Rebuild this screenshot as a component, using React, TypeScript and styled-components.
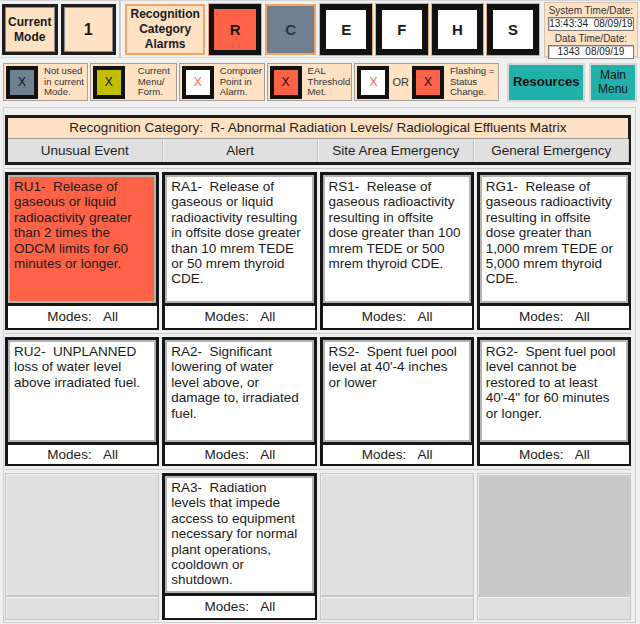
import React from "react";
import styled, { createGlobalStyle, css } from "styled-components";

const GlobalStyle = createGlobalStyle`
  html, body {
    margin: 0;
    padding: 0;
    background: #f0f0f0;
    font-family: "Liberation Sans", Arial, sans-serif;
    color: #1a1a1a;
  }
`;

const PEACH = "#ffe1c4";
const SANDY = "#f2a462";
const TOMATO = "#ff6347";

type Tone = "active" | "off" | "plain";

const categories: { key: string; tone: Tone }[] = [
  { key: "R", tone: "active" },
  { key: "C", tone: "off" },
  { key: "E", tone: "plain" },
  { key: "F", tone: "plain" },
  { key: "H", tone: "plain" },
  { key: "S", tone: "plain" },
];

type Entry = { text: string; hot?: boolean } | null;

const rows: { height: number; modesHeight: number; cells: Entry[]; darkLast?: boolean }[] = [
  {
    height: 134,
    modesHeight: 24,
    cells: [
      {
        text: "RU1-  Release of\ngaseous or liquid\nradioactivity greater\nthan 2 times the\nODCM limits for 60\nminutes or longer.",
        hot: true,
      },
      {
        text: "RA1-  Release of\ngaseous or liquid\nradioactivity resulting\nin offsite dose greater\nthan 10 mrem TEDE\nor 50 mrem thyroid\nCDE.",
      },
      {
        text: "RS1-  Release of\ngaseous radioactivity\nresulting in offsite\ndose greater than 100\nmrem TEDE or 500\nmrem thyroid CDE.",
      },
      {
        text: "RG1-  Release of\ngaseous radioactivity\nresulting in offsite\ndose greater than\n1,000 mrem TEDE or\n5,000 mrem thyroid\nCDE.",
      },
    ],
  },
  {
    height: 108,
    modesHeight: 21,
    cells: [
      { text: "RU2-  UNPLANNED\nloss of water level\nabove irradiated fuel." },
      { text: "RA2-  Significant\nlowering of water\nlevel above, or\ndamage to, irradiated\nfuel." },
      { text: "RS2-  Spent fuel pool\nlevel at 40'-4 inches\nor lower" },
      { text: "RG2-  Spent fuel pool\nlevel cannot be\nrestored to at least\n40'-4\" for 60 minutes\nor longer." },
    ],
  },
  {
    height: 123,
    modesHeight: 24,
    darkLast: true,
    cells: [
      null,
      {
        text: "RA3-  Radiation\nlevels that impede\naccess to equipment\nnecessary for normal\nplant operations,\ncooldown or\nshutdown.",
      },
      null,
      null,
    ],
  },
];

export default function App() {
  return (
    <>
      <GlobalStyle />
      <Screen>
        <TopBar>
          <ModeBox>Current<br />Mode</ModeBox>
          <ModeBox $big>1</ModeBox>
          <Divider />
          <AlarmLabel>Recognition<br />Category<br />Alarms</AlarmLabel>
          {categories.map((c) => (
            <CategoryButton key={c.key} $tone={c.tone}>
              {c.key}
            </CategoryButton>
          ))}
          <TimePanel>
            <TimeLabel>System Time/Date:</TimeLabel>
            <TimeField>13:43:34&nbsp;&nbsp;08/09/19</TimeField>
            <TimeLabel>Data Time/Date:</TimeLabel>
            <TimeField>1343&nbsp;&nbsp;08/09/19</TimeField>
          </TimePanel>
        </TopBar>

        <LegendBar>
          <LegendBox $width={85}>
            <Swatch $fill="#708090">X</Swatch>
            <LegendText>Not used<br />in current<br />Mode.</LegendText>
          </LegendBox>
          <LegendBox $width={87}>
            <Swatch $fill="#bfbf00">X</Swatch>
            <LegendText $indent>Current<br />Menu/<br />Form.</LegendText>
          </LegendBox>
          <LegendBox $width={86}>
            <Swatch $fill="#ffffff" $mark={TOMATO}>X</Swatch>
            <LegendText>Computer<br />Point in<br />Alarm.</LegendText>
          </LegendBox>
          <LegendBox $width={86}>
            <Swatch $fill={TOMATO}>X</Swatch>
            <LegendText>EAL<br />Threshold<br />Met.</LegendText>
          </LegendBox>
          <LegendBox $width={145}>
            <Swatch $fill="#ffffff" $mark={TOMATO}>X</Swatch>
            <OrText>OR</OrText>
            <Swatch $fill={TOMATO}>X</Swatch>
            <LegendText>Flashing =<br />Status<br />Change.</LegendText>
          </LegendBox>
          <ActionButton $width={78} $bold>Resources</ActionButton>
          <ActionButton $width={48}>Main<br />Menu</ActionButton>
        </LegendBar>

        <MatrixFrame>
          <MatrixHead>
            <TitleRow>
              Recognition Category:&nbsp;&nbsp;R- Abnormal Radiation Levels/ Radiological Effluents Matrix
            </TitleRow>
            <HeaderRow>
              {["Unusual Event", "Alert", "Site Area Emergency", "General Emergency"].map((h) => (
                <HeaderCell key={h}>{h}</HeaderCell>
              ))}
            </HeaderRow>
          </MatrixHead>

          {rows.map((row, ri) => (
            <EventRow key={ri}>
              {row.cells.map((cell, ci) =>
                cell ? (
                  <EntryColumn key={ci}>
                    <EntryBox $height={row.height} $hot={cell.hot}>
                      {cell.text}
                    </EntryBox>
                    <ModesBox $height={row.modesHeight}>Modes:&nbsp;&nbsp;&nbsp;All</ModesBox>
                  </EntryColumn>
                ) : (
                  <EntryColumn key={ci}>
                    <EmptyBox $height={row.height} $dark={row.darkLast && ci === 3} />
                    <EmptyModes $height={row.modesHeight} />
                  </EntryColumn>
                )
              )}
            </EventRow>
          ))}
        </MatrixFrame>
      </Screen>
    </>
  );
}

const Screen = styled.div`
  width: 640px;
  height: 624px;
  overflow: hidden;
  background: #f0f0f0;
`;

const TopBar = styled.div`
  display: flex;
  align-items: flex-start;
  height: 58px;
  padding: 3px 2px 0 2px;
  box-sizing: border-box;
  border-top: 1px solid #d4d4d4;
  border-bottom: 1px solid #dadada;
`;

const ModeBox = styled.div<{ $big?: boolean }>`
  width: 56px;
  height: 51px;
  margin-right: 3px;
  box-sizing: border-box;
  background: ${PEACH};
  border: 3px solid #1e1e1e;
  box-shadow: inset 0 0 0 1px #8a8a8a;
  display: flex;
  align-items: center;
  justify-content: center;
  text-align: center;
  font-weight: bold;
  font-size: ${(p) => (p.$big ? "16px" : "12px")};
  line-height: 15px;
  color: #1a1a1a;
`;

const Divider = styled.div`
  width: 2px;
  height: 56px;
  margin: -3px 3px 0 0;
  background: #c8c8c8;
  border-right: 1px solid #ffffff;
`;

const AlarmLabel = styled.div`
  width: 81px;
  height: 51px;
  margin-right: 4px;
  box-sizing: border-box;
  background: ${PEACH};
  border: 2px solid ${SANDY};
  display: flex;
  align-items: center;
  justify-content: center;
  text-align: center;
  font-weight: bold;
  font-size: 12px;
  line-height: 15px;
`;

const toneStyles = {
  active: css`
    background: ${TOMATO};
    border: 5px solid #111;
    outline: 1px solid ${SANDY};
  `,
  off: css`
    background: #708090;
    border: 2px solid ${SANDY};
    color: #2e3640;
  `,
  plain: css`
    background: #ffffff;
    border: 6px solid #111;
    outline: 1px solid ${SANDY};
  `,
};

const CategoryButton = styled.div<{ $tone: Tone }>`
  width: 52px;
  height: 51px;
  margin-right: 4px;
  box-sizing: border-box;
  display: flex;
  align-items: center;
  justify-content: center;
  font-weight: bold;
  font-size: 15px;
  color: #1a1a1a;
  ${(p) => toneStyles[p.$tone]}
`;

const TimePanel = styled.div`
  width: 95px;
  height: 55px;
  margin: -2px 0 0 1px;
  box-sizing: border-box;
  background: ${PEACH};
  border: 1px solid #d6c2ac;
  display: flex;
  flex-direction: column;
  align-items: center;
  padding-top: 1px;
`;

const TimeLabel = styled.div`
  font-size: 10px;
  line-height: 13px;
  color: #333;
`;

const TimeField = styled.div`
  width: 84px;
  height: 12px;
  box-sizing: content-box;
  background: #ffffff;
  border: 1px solid #7a7a7a;
  box-shadow: inset 1px 1px 0 #c8c8c8;
  font-size: 10px;
  line-height: 12px;
  text-align: center;
  color: #222;
  margin-bottom: 1px;
`;

const LegendBar = styled.div`
  display: flex;
  align-items: center;
  height: 48px;
  padding: 0 3px;
  box-sizing: border-box;
  gap: 2px;
`;

const LegendBox = styled.div<{ $width: number }>`
  width: ${(p) => p.$width}px;
  height: 38px;
  box-sizing: border-box;
  background: ${PEACH};
  border: 1px solid #a89f96;
  display: flex;
  align-items: center;
  padding: 0 2px;
  gap: 5px;
  overflow: hidden;
`;

const Swatch = styled.div<{ $fill: string; $mark?: string }>`
  width: 32px;
  height: 33px;
  flex: none;
  box-sizing: border-box;
  border: 4px solid #111;
  background: ${(p) => p.$fill};
  color: ${(p) => p.$mark ?? "#111"};
  display: flex;
  align-items: center;
  justify-content: center;
  font-size: 12px;
`;

const LegendText = styled.div<{ $indent?: boolean }>`
  font-size: 9.6px;
  line-height: 10.5px;
  color: #333;
  white-space: nowrap;
  margin-left: ${(p) => (p.$indent ? "8px" : "1px")};
`;

const OrText = styled.span`
  font-size: 11px;
  color: #333;
  margin: 0 -2px;
`;

const ActionButton = styled.div<{ $width: number; $bold?: boolean }>`
  width: ${(p) => p.$width}px;
  height: 39px;
  box-sizing: border-box;
  background: #20b2aa;
  border: 2px solid #d6d6d6;
  display: flex;
  align-items: center;
  justify-content: center;
  text-align: center;
  font-size: ${(p) => (p.$bold ? "13px" : "12px")};
  font-weight: ${(p) => (p.$bold ? "bold" : "normal")};
  line-height: 14px;
  color: #111;
  margin-left: ${(p) => (p.$bold ? "6px" : "2px")};
`;

const MatrixFrame = styled.div`
  margin: 1px 4px 0 3px;
  box-sizing: border-box;
  height: 516px;
  border: 1px solid #cfcfcf;
  padding: 7px 4px 0 1px;
  background: #f0f0f0;
`;

const MatrixHead = styled.div`
  border: 3px solid #1c1c1c;
`;

const TitleRow = styled.div`
  height: 20px;
  background: ${PEACH};
  border-bottom: 1px solid #9a9a9a;
  font-size: 13.5px;
  line-height: 20px;
  text-align: center;
  color: #222;
`;

const HeaderRow = styled.div`
  display: grid;
  grid-template-columns: repeat(4, 1fr);
  background: #f4f4f4;
  column-gap: 2px;
`;

const HeaderCell = styled.div`
  height: 23px;
  background: #e0e0e0;
  font-size: 13.5px;
  line-height: 23px;
  text-align: center;
  color: #222;
  box-shadow: 1px 0 0 #c4c4c4;
`;

const EventRow = styled.div`
  display: grid;
  grid-template-columns: repeat(4, 1fr);
  column-gap: 3px;
  margin-top: 3px;
  padding-top: 3px;
  border-top: 1px solid #cdcdcd;
`;

const EntryColumn = styled.div`
  display: flex;
  flex-direction: column;
`;

const EntryBox = styled.div<{ $height: number; $hot?: boolean }>`
  height: ${(p) => p.$height}px;
  box-sizing: border-box;
  background: ${(p) => (p.$hot ? TOMATO : "#ffffff")};
  border: 3px solid #161616;
  box-shadow: inset 0 0 0 2px #b4b4b4;
  padding: 4px 6px;
  white-space: pre-wrap;
  font-size: 13.5px;
  line-height: 15.4px;
  color: #1a1a1a;
`;

const ModesBox = styled.div<{ $height: number }>`
  height: ${(p) => p.$height}px;
  box-sizing: border-box;
  background: #ffffff;
  border-left: 3px solid #161616;
  border-right: 2px solid #161616;
  border-bottom: 2px solid #161616;
  font-size: 13.5px;
  line-height: ${(p) => p.$height - 2}px;
  text-align: center;
  color: #222;
`;

const EmptyBox = styled.div<{ $height: number; $dark?: boolean }>`
  height: ${(p) => p.$height}px;
  box-sizing: border-box;
  background: ${(p) => (p.$dark ? "#c8c8c8" : "#e0e0e0")};
  border: 1px solid #c6c6c6;
  box-shadow: inset 1px 1px 0 #f2f2f2;
`;

const EmptyModes = styled.div<{ $height: number }>`
  height: ${(p) => p.$height}px;
  box-sizing: border-box;
  background: #e0e0e0;
  border: 1px solid #c6c6c6;
  box-shadow: inset 1px 1px 0 #f2f2f2;
`;
